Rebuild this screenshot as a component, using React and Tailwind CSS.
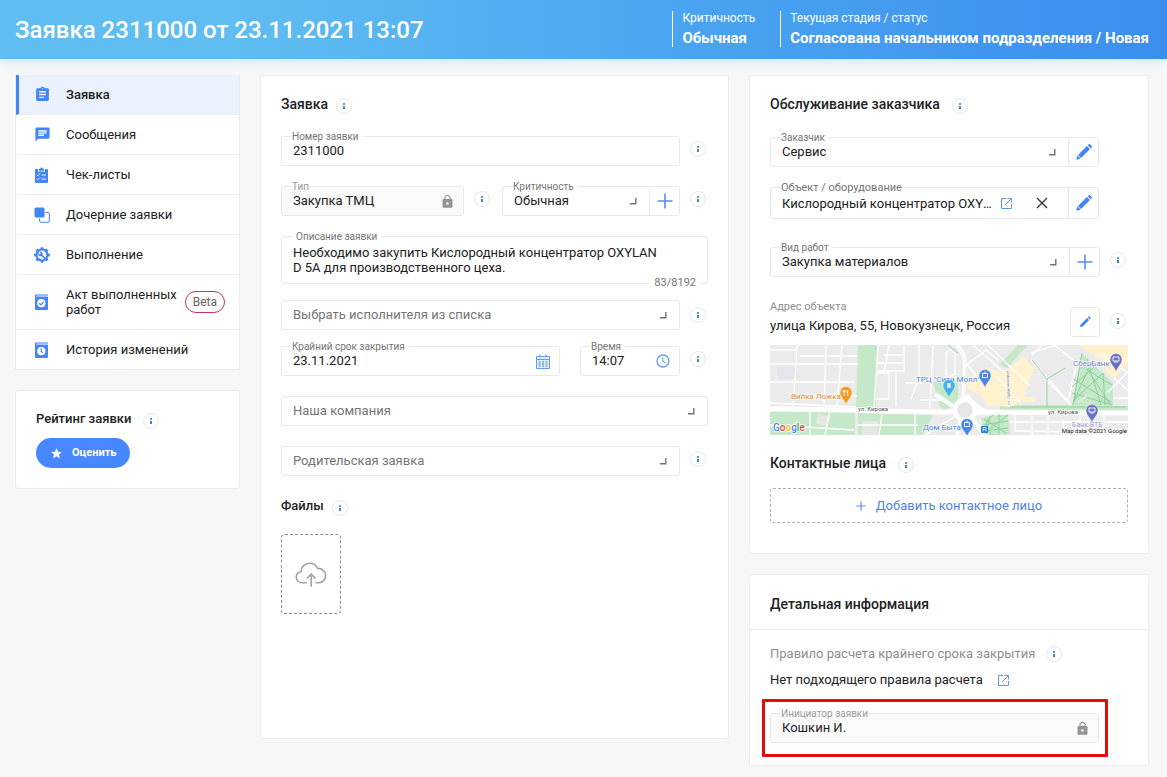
import React, { useId } from 'react';
import { MdAssignment, MdChat, MdLock, MdStar } from 'react-icons/md';

function Info({ label }) {
  return (
    <button
      type="button"
      aria-label={label || 'Подсказка'}
      className="flex h-4 w-4 shrink-0 items-center justify-center rounded-full border border-[#e6e8ec] bg-white"
    >
      <svg width="2" height="8" viewBox="0 0 2 8" shapeRendering="crispEdges">
        <rect width="2" height="2" y="1" fill="#5b9bdc" />
        <rect width="2" height="3" y="4" fill="#4485c4" />
      </svg>
    </button>
  );
}

function Corner() {
  return (
    <svg width="7" height="7" viewBox="0 0 7 7" fill="none" stroke="#757575" strokeWidth="1.4">
      <path d="M0 5.8h5.800V0" />
    </svg>
  );
}

function FloatLabel({ htmlFor, children, muted, large }) {
  return (
    <label
      htmlFor={htmlFor}
      className={
        'absolute left-[10px] -top-[7px] z-10 whitespace-nowrap leading-[14px] ' +
        (large ? 'text-[11px] ' : 'text-[10px] ') +
        (muted ? 'bg-linear-to-b from-white from-50% to-[#fafafa] to-50% text-[#9b9b9b]' : 'bg-white text-[#757575] ') +
        (muted || large ? '' : 'pr-1')
      }
    >
      {children}
    </label>
  );
}

const box = 'relative flex min-w-0 flex-1 items-center rounded-[3px] border border-[#e9e9eb]';
const control = 'h-7 w-full min-w-0 flex-1 appearance-none bg-transparent pl-[11px] text-[13px] text-[#212121] outline-none';

function TextField({ label, value, locked, large, children }) {
  const id = useId();
  return (
    <div className={box + ' h-[30px]' + (locked ? ' bg-[#fafafa]' : ' bg-white')}>
      <FloatLabel htmlFor={id} muted={locked} large={large}>{label}</FloatLabel>
      <input id={id} className={control + ' pb-[2px]'} defaultValue={value} readOnly={locked} />
      {locked && <MdLock className="mr-2 h-[15px] w-[15px] shrink-0 text-[#949494]" />}
      {children}
    </div>
  );
}

function SelectField({ label, value, placeholder, action }) {
  const id = useId();
  return (
    <div className={box + ' h-[30px] bg-white' + (action ? ' rounded-r-none' : '')}>
      {label && <FloatLabel htmlFor={id}>{label}</FloatLabel>}
      <select
        id={id}
        aria-label={label ? undefined : placeholder}
        className={control + (placeholder ? ' text-[#757575]' : '')}
      >
        <option>{value || placeholder}</option>
      </select>
      <span className="pointer-events-none flex w-[19px] shrink-0">
        <Corner />
      </span>
    </div>
  );
}

function ActionButton({ label, children, alone, tall }) {
  return (
    <button
      type="button"
      aria-label={label}
      className={
        'flex shrink-0 items-center justify-center border border-[#e9e9eb] bg-white ' +
        (tall ? 'h-8 ' : 'h-[30px] ') +
        (alone ? 'w-[30px] rounded-[3px]' : '-ml-px w-[31px] rounded-r-[3px]')
      }
    >
      {children}
    </button>
  );
}

function PlusIcon({ size }) {
  return (
    <svg width={size} height={size} viewBox="0 0 16 16" fill="none" stroke="#5b8def" strokeWidth={size > 12 ? 1.6 : 1.8}>
      <path d="M8 .5v15M.5 8h15" />
    </svg>
  );
}

function PencilIcon() {
  return (
    <svg width="16" height="16" viewBox="0 0 16 16" fill="#4285f4">
      <path d="M10.900 2 14 5.100 5.100 14 2 10.900z" />
      <path d="m11.700 1.200 1-1c.4-.3.9-.3 1.300 0l1.800 1.800c.3.4.3.9 0 1.300l-1 1z" />
      <path d="M1.500 11.500 4.500 14.500 1.700 15.500.5 15.500.5 14.300z" />
    </svg>
  );
}

function SlimPencilIcon() {
  return (
    <svg width="12" height="12" viewBox="0 0 12 12" fill="#4285f4">
      <path d="M8.1 1.9 10.1 3.9 3.6 10.4.9 11.1 1.6 8.4z" />
      <path d="m8.7 1.3.7-.7c.3-.3.7-.3 1 0l1 1c.3.3.3.7 0 1l-.7.7z" />
    </svg>
  );
}

function ExternalIcon() {
  return (
    <svg width="11" height="11" viewBox="0 0 11 11" fill="none" stroke="#5a9ae6">
      <path d="M5 .5H.5v10h10V6" />
      <path d="M6.5.5h4v4M10.3.7 4 7" />
    </svg>
  );
}

function ChecklistIcon() {
  return (
    <svg width="15" height="16" viewBox="0 0 15 16">
      <path fill="#4285f4" d="M2 2h2v2.5h7V2h2a1 1 0 0 1 1 1v12a1 1 0 0 1-1 1H2a1 1 0 0 1-1-1V3a1 1 0 0 1 1-1z" />
      <path fill="#4285f4" d="M5 3.7V1.8h1.3a1.2 1.2 0 0 1 2.4 0H10v1.9z" />
      <path fill="none" stroke="#fff" strokeWidth=".9" d="m2.8 7.8 1 1 2-2.2M2.8 11.8l1 1 2-2.2M7.5 8H12M7.5 12H12" />
    </svg>
  );
}

function ChildrenIcon() {
  return (
    <svg width="16" height="16" viewBox="0 0 16 16">
      <rect width="10" height="10" x=".5" y=".5" rx="1.5" fill="#4285f4" />
      <path d="M11.5 5.5h2.5a1.3 1.3 0 0 1 1.3 1.3V14a1.3 1.3 0 0 1-1.3 1.3H6.9A1.3 1.3 0 0 1 5.6 14v-2.5" fill="none" stroke="#4285f4" />
    </svg>
  );
}

function GearIcon() {
  return (
    <svg width="16" height="16" viewBox="0 0 16 16">
      <g fill="#4285f4">
        <circle cx="8" cy="8" r="6.5" />
        {[0, 45, 90, 135, 180, 225, 270, 315].map((a) => (
          <rect key={a} x="6.5" y="0.2" width="3" height="3" rx=".7" transform={`rotate(${a} 8 8)`} />
        ))}
      </g>
      <circle cx="8" cy="8" r="4.4" fill="#fff" />
      <path
        fill="#4285f4"
        d="M11.7 11.1 8.5 7.9a2.5 2.5 0 0 0-3.3-3.1l1.6 1.6-1.1 1.1-1.6-1.6a2.5 2.5 0 0 0 3.2 3.2l3.2 3.2z"
      />
    </svg>
  );
}

function BookIcon({ kind }) {
  return (
    <svg width="15" height="16" viewBox="0 0 15 16">
      <path fill="#4285f4" d="M1 .5h13v1H2.3v1.2H14V15a1 1 0 0 1-1 1H2a1 1 0 0 1-1-1z" />
      <path fill="#8bb4f8" d="M2.3 1.5h10.9v1.1H2.3z" />
      <circle cx="7.3" cy="9.2" r="4.1" fill="#fff" />
      {kind === 'check' ? (
        <path d="m5.2 9.3 1.6 1.6 2.8-3" fill="none" stroke="#4285f4" strokeWidth="1.3" />
      ) : (
        <path d="M7.2 6.6v2.8l1.7 1.4" fill="none" stroke="#4285f4" strokeWidth="1.2" />
      )}
    </svg>
  );
}

function CalendarIcon() {
  return (
    <svg width="14" height="15" viewBox="0 0 14 15" fill="none" stroke="#5f9fea">
      <path d="M.5 2.5h13v12H.5zM.5 5.5h13" fill="#e3effd" />
      <path d="M4 .3v3M10 .3v3" />
      <path d="M2.5 7.8h2M6 7.8h2M9.5 7.8h2M2.5 10h2M6 10h2M9.5 10h2M2.5 12.2h2M6 12.2h2M9.5 12.2h2" strokeWidth="1.3" />
    </svg>
  );
}

function ClockIcon() {
  return (
    <svg width="14" height="14" viewBox="0 0 14 14" fill="none" stroke="#5f9fea" strokeWidth="1.3">
      <circle cx="7" cy="7" r="6" />
      <path d="M6.8 3.2v4l2.8 1.9" strokeWidth="1.1" />
    </svg>
  );
}

function CloudIcon() {
  return (
    <svg width="32" height="25" viewBox="0 0 32 25" fill="none" stroke="#a3a3a3" strokeWidth="1.6">
      <path d="M12 20.7H7.4C3.8 20.7 1.3 18.300 1.300 15.200c0-2.900 1.900-5 4.700-5.400C6.200 4.700 9.800 1.200 14.600 1.200c3.700 0 6.600 1.900 7.900 5.200 4.600-.100 8.200 2.900 8.200 7.200 0 4-3 7.100-7 7.100h-3.200" />
      <path d="M16.200 24.500V12.300M12 16.400l4.200-4.300 4.200 4.300" />
    </svg>
  );
}

const menu = [
  { text: 'Заявка', icon: <MdAssignment className="h-[17px] w-[17px]" />, active: true },
  { text: 'Сообщения', icon: <MdChat className="h-[17px] w-[17px]" /> },
  { text: 'Чек-листы', icon: <ChecklistIcon /> },
  { text: 'Дочерние заявки', icon: <ChildrenIcon /> },
  { text: 'Выполнение', icon: <GearIcon /> },
  { text: 'Акт выполненных работ', icon: <BookIcon kind="check" />, badge: 'Beta' },
  { text: 'История изменений', icon: <BookIcon kind="clock" /> },
];

function Sidebar() {
  return (
    <nav className="border border-t-0 border-[#ececee] bg-white">
      {menu.map((m, i) => (
        <a
          key={m.text}
          href="#"
          className={
            'flex items-center border-l-[3px] pr-[14px] text-[13px] leading-[15px] text-[#212121] ' +
            (m.badge ? 'h-[55px] ' : i === menu.length - 1 ? 'h-[39px] ' : 'h-10 ') +
            (i < menu.length - 1 ? 'border-b border-b-[#ececee] ' : '') +
            (m.active ? 'border-l-[#4285f4] bg-[#ebf1fe] font-medium' : 'border-l-transparent')
          }
        >
          <span className="flex w-[47px] shrink-0 pl-[15px] text-[#4285f4]">{m.icon}</span>
          <span className="flex-1">{m.text}</span>
          {m.badge && (
            <span className="flex h-[22px] items-center rounded-full border border-[#c2375a] px-[7px] text-[12px] text-[#616161]">
              {m.badge}
            </span>
          )}
        </a>
      ))}
    </nav>
  );
}

function Heading({ children, gap = 'gap-3', size = 'text-[14px]' }) {
  return (
    <div className={'flex h-5 items-center ' + gap}>
      <h2 className={'leading-5 font-medium text-[#212121] ' + size}>{children}</h2>
      <span className="pt-[3px]">
        <Info />
      </span>
    </div>
  );
}

function Row({ children, info = true, className = '', drop = 'pt-[5px]' }) {
  return (
    <div className={'flex items-start ' + className}>
      <div className="flex min-w-0 flex-1">{children}</div>
      {info && (
        <div className={'flex w-7 shrink-0 justify-center pl-2 ' + drop}>
          <Info />
        </div>
      )}
    </div>
  );
}

function Pin({ x, y, color, children }) {
  return (
    <g transform={`translate(${x} ${y})`}>
      <path d="M0 5 C-1 0-6-2.500-6-7.500a6 6 0 0 1 12 0C6-2.500 1 0 0 5z" fill={color} stroke="#fff" strokeWidth=".4" />
      {children || <path d="M-2.500-9.500h5v4h-5zM-1-9.500c0-2 2-2 2 0" fill="none" stroke="#fff" strokeWidth=".9" />}
    </g>
  );
}

function MapView() {
  return (
    <svg
      className="block h-[90px] w-full"
      viewBox="0 0 358 90"
      preserveAspectRatio="xMidYMid slice"
      fontFamily="Roboto, sans-serif"
      role="img"
      aria-label="Карта: улица Кирова, 55, Новокузнецк"
    >
      <rect width="358" height="90" fill="#ebebeb" />
      <g fill="#c5e8c9">
        <path d="M88 0h19l-1 63-20-1zM0 65l85 2v23H0zM88 68l75 2-10 20H88z" />
        <path d="m163 38 8-5 17 2v24l-13 6-5-3zM248 0h10l-21 23-8-3zM312 8l31 30v23h-41z" />
        <path d="M230 60h72l56 1v6H230zM211 73l27-4 2 21h-24z" />
      </g>
      <path d="M92 76h16v14H92zM21 80l6-3 6 4-4 6zM48 69l12 3-3 9-11-3z" fill="#e4e8e2" />
      <path d="m197 35 18-13 13 4 8-1 18-13 10 11-10 28-12 11-24-2-8-10-13-6zM308 0h50v17l-14 17-7-6-4-13-14-8zM246 52h19v5h-19z" fill="#fff2cf" />
      <rect x="7" y="22" width="19" height="12" fill="#e3e6ed" />
      <g fill="none" stroke="#fff" strokeWidth="1.300">
        <path d="M0 19h88M27 0l-4 63M0 37h85M30 11h57M56 0l-2 63M72 0 67 63M0 58l86 4M0 5h28M37 51h50" />
        <path d="M108 0l-4 63M107 26h27V0M119 0l-5 28M134 10h-20M108 18h27M107 28h12v26h-14M126 28v33M135 38h19M149 0v34l-8 20M163 0l-3 63M150 55h24M176 8l4-4 5 4v21l-9 4z" />
        <path d="M218 0l42 41M203 0l34 30M194 22l22-17 12 10M197 19l11 14M262 10l13-13M261 15 298 56M261 8l29-9M275 34l26 26M298 56l9-38M284 0l40 31M344 33l14 12M337 48l21-21M330 8l28 20M343 53h15M226 31l25 27" />
        <path d="M245 68v18l113 2M262 68v22M278 70v20M293 75v15M240 77h118M310 70v20M334 70v20M155 90l35-22M40 66v24M60 66l-5 24M0 80l84 5M112 69l-3 21M145 70v20M88 80h60" />
      </g>
      <g fill="none" stroke="#fff">
        <path d="M0 64c60 0 120 3 190 3l168 1" strokeWidth="5" />
        <path d="M185-3c5 8 9 10 10 20l-2 45M198 68l18 24M192 70l-5 20M183 61l-18-12M197 50c5 8 10 13 20 17" strokeWidth="4" />
        <path d="M187 0l9 15-2 45" stroke="#e2e2e2" strokeWidth=".5" />
      </g>
      <circle cx="195" cy="65" r="10" fill="#e6e6e6" stroke="#fff" strokeWidth="4.500" />
      <g fill="none" stroke="#7ecb8f" strokeWidth=".8">
        <path d="m310 13 30 46M304 55l29-27M312 8l-9 52M303 34l38 23M308 20l34 20M321 18l-18 40M317 14l14 46M333 28l2 32M302 48l40 12M302 42l22-20M262 15l15 19v28M277 34l18-11" />
        <path d="m214 74 22 14M238 70l-24 18M220 71l-4 18M229 69v21M213 80l25-4M215 86l23-3M178 0l10 8M240 62h115M224 70c-10 3-10 15-1 20" />
      </g>
      <path d="m308 56 8-6 1 2-8 6z" fill="#e4e8e2" />
      <g stroke="#fff" strokeWidth="1.600" paintOrder="stroke" strokeLinejoin="round">
        <text x="21" y="54" fontSize="8" fill="#d9822b">Вилка Ложка</text>
        <text x="146" y="37" fontSize="8" fill="#4080d8">ТРЦ &quot;Сити Молл&quot;</text>
        <text x="153" y="85" fontSize="8" fill="#4080d8">Дом Быта</text>
        <text x="303" y="21" fontSize="8" fill="#7076c0">СберБанк</text>
        <text x="302" y="82" fontSize="7" fill="#8d91cd">Банк ВТБ</text>
        <text x="88" y="66" fontSize="6" fill="#555">ул. Кирова</text>
        <text x="278" y="69" fontSize="6" fill="#555">ул. Кирова</text>
        <text fontSize="4" fill="#777" transform="translate(240 60) rotate(-92)">ул. Орджоникидзе</text>
      </g>
      <Pin x="76" y="55" color="#f29a1f">
        <path d="M-1.800-10v6M-2.800-10v2h2v-2M1.800-10v6M1.800-10c-1.200 1-1.200 3 0 3" fill="none" stroke="#fff" strokeWidth=".8" />
      </Pin>
      <Pin x="215" y="38" color="#4a86e8" />
      <Pin x="179" y="48" color="#45b0ea">
        <path d="M-1.800-10h3.600v5h-3.600z" fill="#d8f0fc" />
      </Pin>
      <Pin x="346" y="22" color="#6a70c4">
        <path d="M-3-10h6v4h-6zM-2-5h4" fill="none" stroke="#fff" strokeWidth=".9" />
      </Pin>
      <Pin x="322" y="73" color="#6a70c4">
        <path d="M-3-10h6v4h-6zM-2-5h4" fill="none" stroke="#fff" strokeWidth=".9" />
      </Pin>
      <Pin x="197" y="87" color="#4a86e8" />
      <rect x="211" y="81" width="7" height="7" rx="1" fill="#2f73d8" />
      <path d="M213 86.500v-4h3v4M213 84.500h3" fill="none" stroke="#fff" strokeWidth=".8" />
      <text x="3" y="86" fontSize="10" fontWeight="500" stroke="#fff" strokeWidth="1.500" paintOrder="stroke">
        <tspan fill="#4285f4">G</tspan>
        <tspan fill="#ea4335">o</tspan>
        <tspan fill="#fbbc05">o</tspan>
        <tspan fill="#4285f4">g</tspan>
        <tspan fill="#34a853">l</tspan>
        <tspan fill="#ea4335">e</tspan>
      </text>
      <rect x="289" y="83" width="69" height="7" fill="#f3f3f3" opacity=".6" />
      <text x="357" y="88" textAnchor="end" fontSize="6" fill="#222">Map data ©2021 Google</text>
    </svg>
  );
}

function RequestCard() {
  const id = useId();
  return (
    <section className="min-w-0 flex-1 self-start rounded-[3px] border border-[#ececee] bg-white px-5 pt-[18px] pb-[124px]">
      <Heading gap="gap-2">Заявка</Heading>
      <Row className="mt-[22px]">
        <TextField label="Номер заявки" value="2311000" />
      </Row>
      <div className="mt-5 flex">
        <div className="w-[211px] shrink-0">
          <Row>
            <TextField label="Тип" value="Закупка ТМЦ" locked />
          </Row>
        </div>
        <div className="min-w-0 flex-1 pl-[10px]">
          <Row>
            <SelectField label="Критичность" value="Обычная" action />
            <ActionButton label="Добавить критичность">
              <PlusIcon size={16} />
            </ActionButton>
          </Row>
        </div>
      </div>
      <div className="relative mt-5 h-12 rounded-[3px] border border-[#e9e9eb]">
        <label htmlFor={id} className="absolute left-[10px] -top-[7px] bg-white px-1 text-[10px] leading-[14px] text-[#757575]">
          Описание заявки
        </label>
        <textarea
          id={id}
          className="block h-[46px] w-full resize-none overflow-hidden bg-transparent pt-2 pl-[11px] pr-10 text-[13px] leading-[15px] text-[#212121] outline-none"
          defaultValue="Необходимо закупить Кислородный концентратор OXYLAN D 5A для производственного цеха."
        />
        <span className="absolute right-[7px] -bottom-2 bg-white px-1 text-[11px] leading-4 text-[#757575]">83/8192</span>
      </div>
      <Row className="mt-4" drop="pt-[7px]">
        <SelectField placeholder="Выбрать исполнителя из списка" />
      </Row>
      <Row className="mt-4">
        <div className="flex flex-1 gap-5">
          <TextField label="Крайний срок закрытия" value="23.11.2021">
            <span className="mr-[9px] shrink-0"><CalendarIcon /></span>
          </TextField>
          <div className="flex w-[100px]">
            <TextField label="Время" value="14:07">
              <span className="mr-[9px] shrink-0"><ClockIcon /></span>
            </TextField>
          </div>
        </div>
      </Row>
      <Row className="mt-5" info={false}>
        <SelectField placeholder="Наша компания" />
      </Row>
      <Row className="mt-5">
        <SelectField placeholder="Родительская заявка" />
      </Row>
      <div className="mt-5">
        <Heading gap="gap-2" size="text-[13px]">Файлы</Heading>
      </div>
      <button
        type="button"
        aria-label="Загрузить файл"
        className="mt-[18px] flex h-20 w-[60px] items-center justify-center rounded-[4px] border border-dashed border-[#8c8c8c]"
      >
        <CloudIcon />
      </button>
    </section>
  );
}

function ServiceCard() {
  const id = useId();
  return (
    <section className="rounded-[3px] border border-[#ececee] bg-white px-5 pt-[18px] pb-[30px]">
      <Heading>Обслуживание заказчика</Heading>
      <div className="mt-[23px] flex pr-[29px]">
        <SelectField label="Заказчик" value="Сервис" action />
        <ActionButton label="Изменить заказчика"><PencilIcon /></ActionButton>
      </div>
      <div className="mt-5 flex pr-[29px]">
        <div className={box + ' h-8'}>
          <FloatLabel htmlFor={id} large>Объект / оборудование</FloatLabel>
          <input
            id={id}
            className="h-7 w-[221px] flex-none truncate bg-transparent pl-[11px] text-[13px] text-[#212121] outline-none"
            defaultValue="Кислородный концентратор OXYLAN D 5A"
          />
          <a href="#" aria-label="Открыть объект" className="ml-[9px]"><ExternalIcon /></a>
          <button type="button" aria-label="Очистить" className="ml-6">
            <svg width="12" height="12" viewBox="0 0 12 12" fill="none" stroke="#333" strokeWidth="1.300">
              <path d="m1 1 10 10M11 1 1 11" />
            </svg>
          </button>
        </div>
        <ActionButton label="Изменить объект" tall><PencilIcon /></ActionButton>
      </div>
      <Row className="mt-7">
        <SelectField label="Вид работ" value="Закупка материалов" action />
        <ActionButton label="Добавить вид работ"><PlusIcon size={16} /></ActionButton>
      </Row>
      <Row className="mt-[23px]" drop="pt-[13px]">
        <div className="flex flex-1 items-end justify-between">
          <div className="pb-[3px]">
            <div className="text-[11px] leading-[14px] text-[#8e8e8e]">Адрес объекта</div>
            <div className="mt-1 text-[13px] leading-4 text-[#212121]">улица Кирова, 55, Новокузнецк, Россия</div>
          </div>
          <ActionButton label="Изменить адрес" alone><SlimPencilIcon /></ActionButton>
        </div>
      </Row>
      <div className="mt-2">
        <MapView />
      </div>
      <div className="mt-[18px]">
        <Heading>Контактные лица</Heading>
      </div>
      <button
        type="button"
        className="mt-[15px] flex h-[35px] w-full items-center justify-center gap-[10px] rounded-[3px] border border-dashed border-[#b0b0b0] text-[13px] text-[#5381e8]"
      >
        <PlusIcon size={10} />
        Добавить контактное лицо
      </button>
    </section>
  );
}

function DetailsCard() {
  return (
    <section className="rounded-[3px] border border-[#ececee] bg-white">
      <h2 className="flex h-[55px] items-center border-b border-[#ececee] px-5 pt-1 text-[14px] font-medium text-[#212121]">
        Детальная информация
      </h2>
      <div className="px-5 pt-4 pb-[22px]">
        <div className="flex items-center gap-[11px] text-[13px] leading-4 text-[#8e8e8e]">
          Правило расчета крайнего срока закрытия
          <Info />
        </div>
        <div className="mt-[10px] flex items-center gap-[15px] text-[13px] leading-4 text-[#212121]">
          Нет подходящего правила расчета
          <a href="#" aria-label="Открыть правило"><ExternalIcon /></a>
        </div>
        <div className="relative mt-[25px] mr-[29px] flex">
          <TextField label="Инициатор заявки" value="Кошкин И." locked />
          <div className="pointer-events-none absolute -top-[14px] -right-[9px] -bottom-[14px] -left-2 rounded-[1px] border-[3px] border-[#e30b0b]" />
        </div>
      </div>
    </section>
  );
}

export default function App() {
  return (
    <div className="min-h-screen bg-[#f7f7f7] font-['Roboto',sans-serif]">
      <header className="flex h-[59px] items-center justify-between bg-linear-to-r from-[#5fbdf1] from-20% via-[#4ba4f0] via-58% to-[#3a8eee] pl-[15px] pr-[18px] text-white shadow-[0_3px_10px_#cfe8fa]">
        <h1 className="text-[24px] font-medium">Заявка 2311000 от 23.11.2021 13:07</h1>
        <dl className="flex gap-[25px] pb-[2px]">
          <div className="border-l border-white pl-[9px]">
            <dt className="text-[12px] leading-[14px]">Критичность</dt>
            <dd className="mt-1 text-[15px] leading-[18px] font-bold">Обычная</dd>
          </div>
          <div className="border-l border-white pl-[9px]">
            <dt className="text-[12px] leading-[14px]">Текущая стадия / статус</dt>
            <dd className="mt-1 text-[15px] leading-[18px] font-bold">Согласована начальником подразделения / Новая</dd>
          </div>
        </dl>
      </header>
      <main className="flex gap-5 pt-4 pr-[18px] pb-[11px] pl-[15px]">
        <aside className="flex w-[225px] shrink-0 flex-col gap-5">
          <Sidebar />
          <section className="rounded-[3px] border border-[#ececee] bg-white px-5 pt-[18px] pb-5">
            <Heading size="text-[13px]">Рейтинг заявки</Heading>
            <button
              type="button"
              className="mt-[9px] flex h-[30px] items-center gap-[9px] rounded-full bg-[#4787ff] px-[14px] text-[11px] font-bold text-white"
            >
              <MdStar className="h-[13px] w-[13px]" />
              Оценить
            </button>
          </section>
        </aside>
        <RequestCard />
        <div className="flex w-[400px] shrink-0 flex-col gap-5">
          <ServiceCard />
          <DetailsCard />
        </div>
      </main>
    </div>
  );
}
